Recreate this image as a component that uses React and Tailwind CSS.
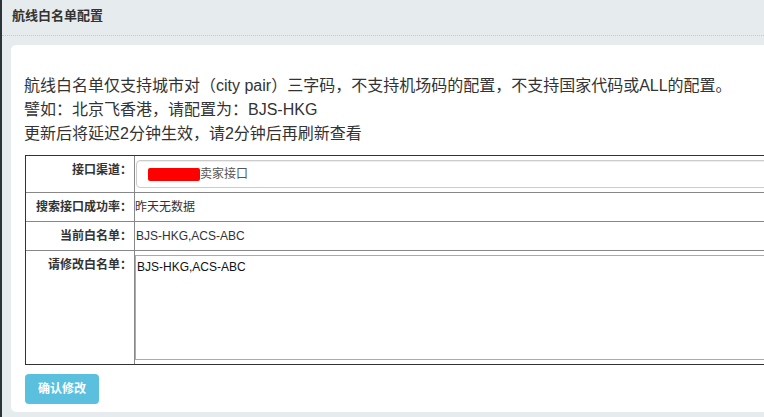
import React from 'react';

const font = { fontFamily: '"Liberation Sans", "Noto Sans CJK SC", sans-serif' };

// One row of the config table: label on the left, value on the right
const Row = ({ label, children, className = '', last = false }) => (
  <div className={`flex ${last ? '' : 'border-b border-[#888]'} ${className}`}>
    <div className="w-[109px] shrink-0 border-r border-[#888] pt-[6px] pr-[2px] text-right text-[12px] leading-[16px] font-bold text-[#333]">
      {label}
    </div>
    <div className="flex-1 text-[12px] leading-[16px] text-[#333]">{children}</div>
  </div>
);

export default function App() {
  return (
    <div className="flex w-[764px] h-[417px] overflow-hidden bg-[#e6ebee]" style={font}>
      <div className="w-[2px] shrink-0 bg-[#2a3439]" />
      <div className="flex-1 min-w-0">
        {/* Header */}
        <div className="h-[36px] border-b border-dotted border-[#c8c8c8] pl-[10px] pt-[8px]">
          <h1 className="text-[13px] leading-[16px] font-bold text-[#333]">航线白名单配置</h1>
        </div>

        {/* Card */}
        <div className="mt-[9px] ml-[9px] w-[900px] h-[367px] rounded-[5px] bg-white pt-[29px] pl-[13px]">
          <div className="text-[16px] leading-[24px] text-[#333]">
            <p>航线白名单仅支持城市对（city pair）三字码，不支持机场码的配置，不支持国家代码或ALL的配置。</p>
            <p>譬如：北京飞香港，请配置为：BJS-HKG</p>
            <p>更新后将延迟2分钟生效，请2分钟后再刷新查看</p>
          </div>

          <div className="mt-[9px] ml-px w-[860px] border border-[#333]">
            <Row label="接口渠道：" className="h-[37px]">
              <div className="mt-[4px] ml-px h-[28px] rounded-[4px] border border-[#ccc] shadow-[inset_0_1px_1px_rgba(0,0,0,0.075)] flex items-center pl-[11px] text-[#555]">
                <span className="inline-block w-[52px] h-[13px] rounded-[2px] bg-[#ff0000]" />
                <span>卖家接口</span>
              </div>
            </Row>
            <Row label="搜索接口成功率：" className="h-[29px]">
              <div className="pt-[6px]">昨天无数据</div>
            </Row>
            <Row label="当前白名单：" className="h-[29px]">
              <div className="pt-[6px] pl-px">BJS-HKG,ACS-ABC</div>
            </Row>
            <Row label="请修改白名单：" className="h-[113px]" last>
              <textarea
                className="mt-[4px] block w-full h-[105px] resize-none border border-[#aaa] px-[1px] pt-[3px] text-[12px] leading-[16px] text-[#111] outline-none"
                style={font}
                defaultValue="BJS-HKG,ACS-ABC"
              />
            </Row>
          </div>

          <button className="mt-[9px] ml-px w-[74px] h-[30px] rounded-[4px] bg-[#5bc0de] text-[12px] font-bold text-white">
            确认修改
          </button>
        </div>
      </div>
    </div>
  );
}
